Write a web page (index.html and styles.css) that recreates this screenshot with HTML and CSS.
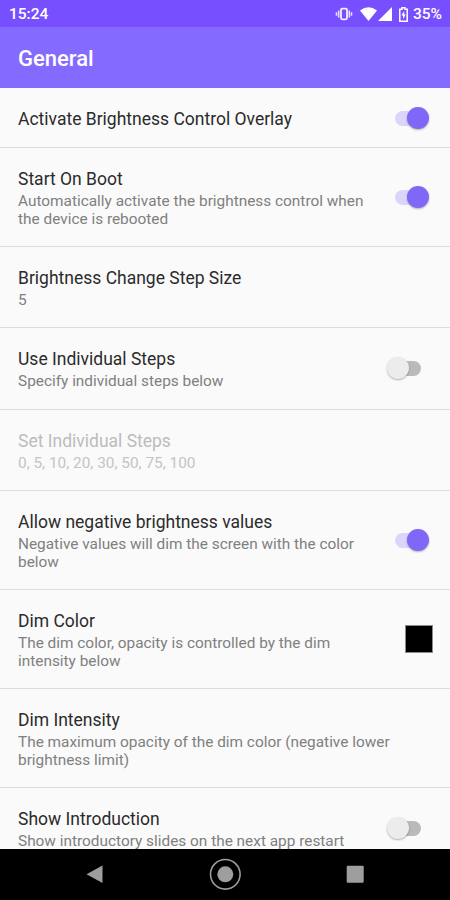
FILE: index.html
```html
<!DOCTYPE html>
<html lang="en">
<head>
    <meta charset="UTF-8">
    <meta name="viewport" content="width=device-width, initial-scale=1.0">
    <title>General</title>
    <link rel="stylesheet" href="styles.css">
</head>
<body>
    <div class="screen">
        <div class="statusbar">
            <span class="time">15:24</span>
            <div class="status-icons">
                <svg class="vibrate" width="18" height="14" viewBox="0 0 18 14">
                    <rect x="6" y="1.7" width="6" height="10.6" rx="1.2" fill="none" stroke="#fff" stroke-opacity=".9" stroke-width="1.8"/>
                    <path d="M3.7 3.5v7M1.5 5.3v3.4M14.3 3.5v7M16.5 5.3v3.4" stroke="#fff" stroke-opacity=".8" stroke-width="1.6"/>
                </svg>
                <svg class="wifi" width="17" height="14" viewBox="0 0 17 14">
                    <path d="M0 3.6Q8.5-3 17 3.6L8.5 14z" fill="#fff"/>
                </svg>
                <svg class="signal" width="14" height="14" viewBox="0 0 14 14">
                    <path d="M14 0v14H0z" fill="#fff"/>
                </svg>
                <svg class="battery" width="9" height="15" viewBox="0 0 9 15">
                    <path d="M3 .7h3v1.5h2.2v12H.8v-12H3z" fill="none" stroke="#fff" stroke-width="1.5"/>
                    <path d="M5.2 4L2.4 8.6h1.7v3.7L6.7 7.5H5.2z" fill="#fff"/>
                </svg>
            </div>
            <span class="percent">35%</span>
        </div>
        <header class="toolbar">
            <h1>General</h1>
        </header>
        <main class="list">
            <div class="row">
                <div class="text">
                    <div class="title">Activate Brightness Control Overlay</div>
                </div>
                <span class="switch on"></span>
            </div>
            <div class="row">
                <div class="text">
                    <div class="title">Start On Boot</div>
                    <div class="summary">Automatically activate the brightness control when<br>the device is rebooted</div>
                </div>
                <span class="switch on"></span>
            </div>
            <div class="row">
                <div class="text">
                    <div class="title">Brightness Change Step Size</div>
                    <div class="summary">5</div>
                </div>
            </div>
            <div class="row">
                <div class="text">
                    <div class="title">Use Individual Steps</div>
                    <div class="summary">Specify individual steps below</div>
                </div>
                <span class="switch"></span>
            </div>
            <div class="row disabled">
                <div class="text">
                    <div class="title">Set Individual Steps</div>
                    <div class="summary">0, 5, 10, 20, 30, 50, 75, 100</div>
                </div>
            </div>
            <div class="row">
                <div class="text">
                    <div class="title">Allow negative brightness values</div>
                    <div class="summary">Negative values will dim the screen with the color<br>below</div>
                </div>
                <span class="switch on"></span>
            </div>
            <div class="row">
                <div class="text">
                    <div class="title">Dim Color</div>
                    <div class="summary">The dim color, opacity is controlled by the dim<br>intensity below</div>
                </div>
                <span class="color"></span>
            </div>
            <div class="row">
                <div class="text">
                    <div class="title">Dim Intensity</div>
                    <div class="summary">The maximum opacity of the dim color (negative lower<br>brightness limit)</div>
                </div>
            </div>
            <div class="row last">
                <div class="text">
                    <div class="title">Show Introduction</div>
                    <div class="summary">Show introductory slides on the next app restart</div>
                </div>
                <span class="switch"></span>
            </div>
        </main>
        <nav class="navbar">
            <svg width="450" height="51" viewBox="0 0 450 51">
                <path d="M86.5 25.3L102.5 16.5v17.6z" fill="#9e9e9e"/>
                <circle cx="225.3" cy="25.3" r="14.8" fill="none" stroke="#9e9e9e" stroke-width="1.6"/>
                <circle cx="225.3" cy="25.3" r="8" fill="#9e9e9e"/>
                <rect x="346.7" y="16.7" width="17" height="17" rx="1" fill="#9e9e9e"/>
            </svg>
        </nav>
    </div>
</body>
</html>
```
FILE: styles.css
```css
body{
    margin: 0;
    font-family: Roboto, "Liberation Sans", sans-serif;
}
.screen{
    display: flex;
    flex-direction: column;
    width: 450px;
    height: 900px;
    overflow: hidden;
    background: #fafafa;
}
.statusbar{
    display: flex;
    align-items: center;
    flex: none;
    box-sizing: border-box;
    height: 27px;
    padding: 1px 8px 0 9px;
    background: #784fff;
    color: #fff;
    font-size: 15.5px;
    font-weight: 500;
}
.status-icons{
    display: flex;
    align-items: center;
    margin-left: auto;
    margin-right: 5px;
}
.wifi{
    margin-left: 7px;
}
.signal{
    margin-left: 1px;
}
.battery{
    margin-left: 7px;
}
.toolbar{
    display: flex;
    align-items: center;
    flex: none;
    box-sizing: border-box;
    height: 61px;
    padding: 2px 18px 0;
    background: #846aff;
    color: #fff;
}
.toolbar h1{
    margin: 0;
    font-size: 22px;
    font-weight: 500;
}
.list{
    flex: 1;
    min-height: 0;
    overflow: hidden;
}
.row{
    display: flex;
    align-items: center;
    box-sizing: border-box;
    padding: 19px 17px 18.1px 18px;
    border-bottom: 1px solid #dedede;
}
.row.last{
    border-bottom: none;
}
.text{
    flex: 1;
    white-space: nowrap;
}
.title{
    padding-top: 2px;
    font-size: 17.5px;
    line-height: 20px;
    color: #2b2b2b;
}
.summary{
    margin-top: 3px;
    font-size: 15.38px;
    line-height: 18.05px;
    color: #808080;
}
.disabled .title{
    color: #bcbcbc;
}
.disabled .summary{
    color: #c4c4c4;
}
.switch{
    position: relative;
    flex: none;
    width: 26px;
    height: 15px;
    margin-right: 12px;
    border-radius: 8px;
    background: #bababa;
}
.switch::after{
    content: "";
    position: absolute;
    top: -4px;
    left: -8px;
    width: 22px;
    height: 22px;
    border-radius: 50%;
    background: #ececec;
    box-shadow: 0 1px 2px rgba(0,0,0,.3);
}
.switch.on{
    background: #dcd5fb;
}
.switch.on::after{
    left: 12px;
    background: #8067f7;
}
.color{
    flex: none;
    box-sizing: border-box;
    width: 28px;
    height: 28px;
    border: 1px solid #8a8a8a;
    background: #000;
}
.navbar{
    flex: none;
    height: 51px;
    background: #000;
}
```
